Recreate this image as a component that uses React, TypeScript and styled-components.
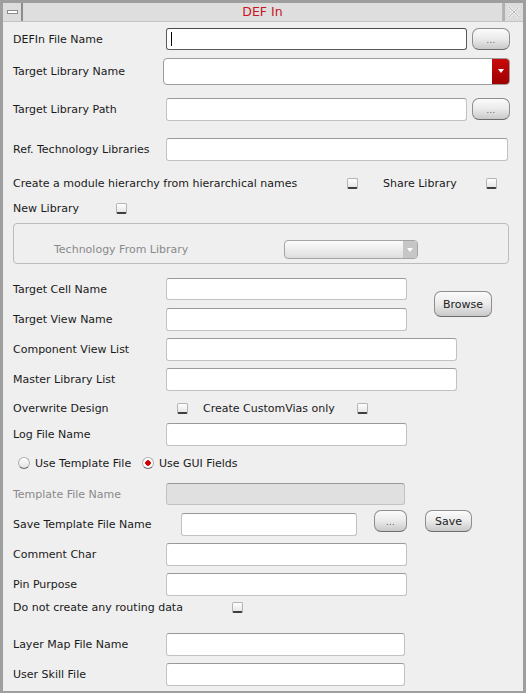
import React from "react"
import styled, { createGlobalStyle } from "styled-components"

const GlobalStyle = createGlobalStyle`
  html, body {
    margin: 0;
    padding: 0;
    background: #efefef;
  }
  body {
    font-family: "DejaVu Sans", "Liberation Sans", sans-serif;
    font-size: 11px;
    color: #1a1a1a;
  }
`

const Window = styled.div`
  width: 526px;
  height: 693px;
  box-sizing: border-box;
  background: #efefef;
  border-left: 3px solid #9e9e9e;
  border-right: 3px solid #9e9e9e;
  border-bottom: 2px solid #9e9e9e;
  display: flex;
  flex-direction: column;
  overflow: hidden;
`

const TitleBar = styled.div`
  height: 22px;
  box-sizing: border-box;
  display: flex;
  align-items: stretch;
  border-top: 3px solid #9e9e9e;
  border-bottom: 1px solid #c4c4c4;
  background: #dedede;
`

const TitleButton = styled.div<{ $side: "left" | "right" }>`
  width: 18px;
  display: flex;
  align-items: center;
  justify-content: center;
  background: #dcdcdc;
  ${(p) => (p.$side === "left" ? "border-right: 2px solid #8c8c8c;" : "border-left: 2px solid #b0b0b0;")}
`

const MinBar = styled.div`
  width: 9px;
  height: 2px;
  background: #ffffff;
  border: 1px solid #8a8a8a;
`

const Title = styled.div`
  flex: 1;
  text-align: center;
  color: #c8141c;
  font-size: 12.5px;
  line-height: 18px;
  border-right: 1px solid #b8b8b8;
`

const Body = styled.div`
  flex: 1;
  display: flex;
  flex-direction: column;
  padding: 2px 0 0 10px;
`

const Row = styled.div<{ $h: number; $mt?: number }>`
  display: flex;
  align-items: center;
  height: ${(p) => p.$h}px;
  margin-top: ${(p) => p.$mt ?? 0}px;
  flex-shrink: 0;
`

const Label = styled.span<{ $w?: number; $dim?: boolean }>`
  width: ${(p) => (p.$w ? `${p.$w}px` : "auto")};
  flex-shrink: 0;
  white-space: nowrap;
  color: ${(p) => (p.$dim ? "#8a8a8a" : "#1a1a1a")};
`

const TextField = styled.div<{ $w: number; $h?: number; $focus?: boolean; $disabled?: boolean }>`
  width: ${(p) => p.$w}px;
  height: ${(p) => p.$h ?? 23}px;
  box-sizing: border-box;
  border: 1px solid ${(p) => (p.$focus ? "#5a5a5a" : "#c2c2c2")};
  border-top-color: ${(p) => (p.$focus ? "#4a4a4a" : "#9a9a9a")};
  border-radius: 3px;
  background: ${(p) => (p.$disabled ? "#e0e0e0" : "#ffffff")};
  position: relative;
  flex-shrink: 0;
`

const Caret = styled.span`
  position: absolute;
  left: 4px;
  top: 3px;
  width: 1px;
  height: 14px;
  background: #000;
`

const PushButton = styled.div<{ $w: number; $h?: number }>`
  width: ${(p) => p.$w}px;
  height: ${(p) => p.$h ?? 22}px;
  box-sizing: border-box;
  border: 1px solid #8e8e8e;
  border-bottom-color: #6c6c6c;
  border-radius: 7px;
  background: linear-gradient(#fbfbfb, #eaeaea 50%, #c9c9c9);
  display: flex;
  align-items: center;
  justify-content: center;
  color: #222;
  flex-shrink: 0;
`

const Dots = styled.span`
  font-size: 8px;
  color: #555;
  letter-spacing: 0.5px;
  margin-top: 2px;
`

const Combo = styled.div<{ $w: number; $h: number; $disabled?: boolean }>`
  width: ${(p) => p.$w}px;
  height: ${(p) => p.$h}px;
  box-sizing: border-box;
  border: 1px solid ${(p) => (p.$disabled ? "#a4a4a4" : "#9c9c9c")};
  border-radius: 4px;
  background: ${(p) => (p.$disabled ? "linear-gradient(#fcfcfc, #dedede)" : "#ffffff")};
  display: flex;
  justify-content: flex-end;
  overflow: hidden;
  flex-shrink: 0;
`

const ComboArrow = styled.div<{ $disabled?: boolean }>`
  width: ${(p) => (p.$disabled ? 14 : 17)}px;
  display: flex;
  align-items: center;
  justify-content: center;
  background: ${(p) => (p.$disabled ? "#c6c6c6" : "linear-gradient(#c80a0a, #a00000)")};
  &::after {
    content: "";
    border-left: 3px solid transparent;
    border-right: 3px solid transparent;
    border-top: 4px solid #ffffff;
  }
`

const Check = styled.span`
  width: 11px;
  height: 11px;
  box-sizing: border-box;
  border: 1px solid #b4b4b4;
  border-bottom: 2px solid #3e3e3e;
  border-radius: 2px;
  background: linear-gradient(#ffffff, #e6e6e6);
  flex-shrink: 0;
`

const Radio = styled.span<{ $on?: boolean; $ml: number }>`
  width: 12px;
  height: 12px;
  box-sizing: border-box;
  margin-left: ${(p) => p.$ml}px;
  margin-right: 5px;
  border-radius: 50%;
  border: 1px solid #b0b0b0;
  border-bottom-color: #6a6a6a;
  background: ${(p) =>
    p.$on
      ? "radial-gradient(circle, #d40000 0 2.5px, #ffffff 3px)"
      : "linear-gradient(#ffffff, #e2e2e2)"};
  flex-shrink: 0;
`

const GroupBox = styled.div`
  margin: 5px 0 0 0;
  width: 496px;
  height: 41px;
  box-sizing: border-box;
  border: 1px solid #bcbcbc;
  border-radius: 4px;
  padding: 12px 0 0 40px;
  display: flex;
  align-items: center;
  flex-shrink: 0;
`

const PairBlock = styled.div`
  display: flex;
  align-items: center;
  margin-top: 10px;
  flex-shrink: 0;
`

const PairColumn = styled.div`
  display: flex;
  flex-direction: column;
`

const CloseGlyph = () => (
  <svg width="12" height="12" viewBox="0 0 12 12">
    <path d="M1 1 L11 11 M11 1 L1 11" stroke="#f4f4f4" strokeWidth="3" strokeDasharray="1.5 1" />
    <path d="M1 1 L11 11 M11 1 L1 11" stroke="#b8b8b8" strokeWidth="1" />
  </svg>
)

const LW = 153

export default function App() {
  return (
    <>
      <GlobalStyle />
      <Window>
        <TitleBar>
          <TitleButton $side="left">
            <MinBar />
          </TitleButton>
          <Title>DEF In</Title>
          <TitleButton $side="right">
            <CloseGlyph />
          </TitleButton>
        </TitleBar>
        <Body>
          <Row $h={30}>
            <Label $w={LW}>DEFIn File Name</Label>
            <TextField $w={301} $h={22} $focus>
              <Caret />
            </TextField>
            <PushButton $w={38} $h={22} style={{ marginLeft: 5 }}>
              <Dots>...</Dots>
            </PushButton>
          </Row>
          <Row $h={34}>
            <Label $w={150}>Target Library Name</Label>
            <Combo $w={347} $h={27}>
              <ComboArrow />
            </Combo>
          </Row>
          <Row $h={42}>
            <Label $w={LW}>Target Library Path</Label>
            <TextField $w={301}></TextField>
            <PushButton $w={38} $h={22} style={{ marginLeft: 5 }}>
              <Dots>...</Dots>
            </PushButton>
          </Row>
          <Row $h={38}>
            <Label $w={LW}>Ref. Technology Libraries</Label>
            <TextField $w={342}></TextField>
          </Row>
          <Row $h={30}>
            <Label $w={334}>Create a module hierarchy from hierarchical names</Label>
            <Check />
            <Label style={{ marginLeft: 25 }} $w={103}>Share Library</Label>
            <Check />
          </Row>
          <Row $h={20}>
            <Label $w={103}>New Library</Label>
            <Check />
          </Row>
          <GroupBox>
            <Label $w={230} $dim>Technology From Library</Label>
            <Combo $w={134} $h={19} $disabled>
              <ComboArrow $disabled />
            </Combo>
          </GroupBox>
          <PairBlock>
            <PairColumn>
              <Row $h={30}>
                <Label $w={LW}>Target Cell Name</Label>
                <TextField $w={241} $h={22}></TextField>
              </Row>
              <Row $h={30}>
                <Label $w={LW}>Target View Name</Label>
                <TextField $w={241}></TextField>
              </Row>
            </PairColumn>
            <PushButton $w={58} $h={26} style={{ marginLeft: 27 }}>
              Browse
            </PushButton>
          </PairBlock>
          <Row $h={30}>
            <Label $w={LW}>Component View List</Label>
            <TextField $w={291}></TextField>
          </Row>
          <Row $h={30}>
            <Label $w={LW}>Master Library List</Label>
            <TextField $w={291}></TextField>
          </Row>
          <Row $h={28}>
            <Label $w={164}>Overwrite Design</Label>
            <Check />
            <Label style={{ marginLeft: 15 }} $w={154}>Create CustomVias only</Label>
            <Check />
          </Row>
          <Row $h={25}>
            <Label $w={LW}>Log File Name</Label>
            <TextField $w={241}></TextField>
          </Row>
          <Row $h={32}>
            <Radio $ml={5} />
            <Label $w={107}>Use Template File</Label>
            <Radio $on $ml={0} />
            <Label>Use GUI Fields</Label>
          </Row>
          <Row $h={30}>
            <Label $w={LW} $dim>Template File Name</Label>
            <TextField $w={239} $h={22} $disabled></TextField>
          </Row>
          <Row $h={30}>
            <Label $w={168}>Save Template File Name</Label>
            <TextField $w={176}></TextField>
            <PushButton $w={33} $h={22} style={{ marginLeft: 17, marginBottom: 6 }}>
              <Dots>...</Dots>
            </PushButton>
            <PushButton $w={47} $h={22} style={{ marginLeft: 18, marginBottom: 6 }}>
              Save
            </PushButton>
          </Row>
          <Row $h={30}>
            <Label $w={LW}>Comment Char</Label>
            <TextField $w={241}></TextField>
          </Row>
          <Row $h={30}>
            <Label $w={LW}>Pin Purpose</Label>
            <TextField $w={241}></TextField>
          </Row>
          <Row $h={16}>
            <Label $w={219}>Do not create any routing data</Label>
            <Check />
          </Row>
          <Row $h={30} $mt={14}>
            <Label $w={LW}>Layer Map File Name</Label>
            <TextField $w={239}></TextField>
          </Row>
          <Row $h={30}>
            <Label $w={LW}>User Skill File</Label>
            <TextField $w={239}></TextField>
          </Row>
        </Body>
      </Window>
    </>
  )
}
